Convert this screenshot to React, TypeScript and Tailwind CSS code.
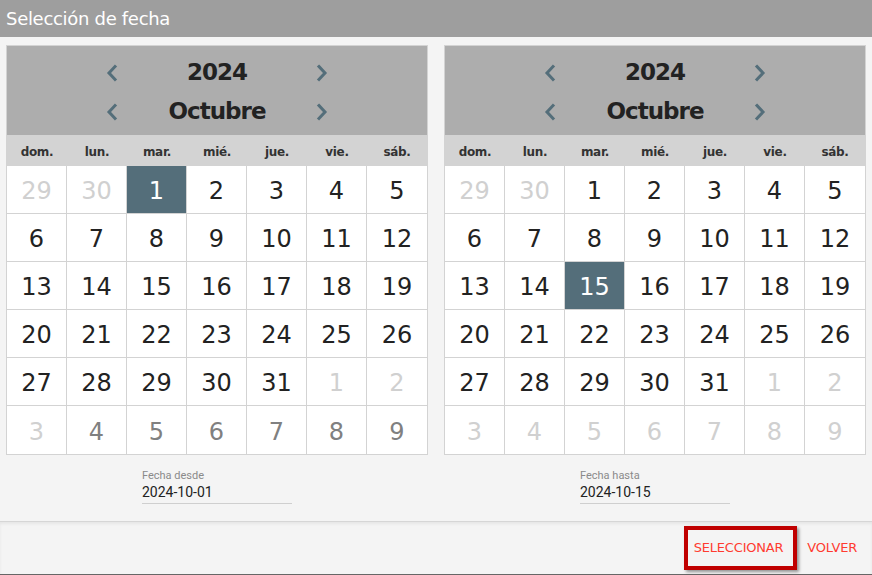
import React from 'react';

type Day = { n: number; tone: 'cur' | 'light' | 'mid' };

const WEEKDAYS = ['dom.', 'lun.', 'mar.', 'mié.', 'jue.', 'vie.', 'sáb.'];

// Octubre 2024 starts on Tuesday
const buildDays = (midTail: boolean): Day[] => {
  const days: Day[] = [
    { n: 29, tone: 'light' },
    { n: 30, tone: 'light' },
  ];
  for (let i = 1; i <= 31; i++) days.push({ n: i, tone: 'cur' });
  for (let i = 1; i <= 9; i++) {
    days.push({ n: i, tone: midTail && i >= 4 ? 'mid' : 'light' });
  }
  return days;
};

const Chevron = ({ dir }: { dir: 'left' | 'right' }) => (
  <svg width="14" height="18" viewBox="0 0 14 18" fill="none">
    <path
      d={dir === 'left' ? 'M10 2.5 L4 9 L10 15.5' : 'M4 2.5 L10 9 L4 15.5'}
      stroke="#546e7a"
      strokeWidth="3"
      strokeLinecap="square"
    />
  </svg>
);

const NavRow = ({ label }: { label: string }) => (
  <div className="flex h-[39px] items-center justify-center">
    <div className="flex w-[20px] justify-center">
      <Chevron dir="left" />
    </div>
    <div className="w-[190px] text-center text-[23px] font-bold tracking-[-1px] text-[#222]">{label}</div>
    <div className="flex w-[20px] justify-center">
      <Chevron dir="right" />
    </div>
  </div>
);

const Calendar = ({ selected, midTail }: { selected: number; midTail: boolean }) => {
  const days = buildDays(midTail);
  return (
    <div className="w-[422px] border border-[#d3d3d3] bg-white">
      {/* Header */}
      <div className="bg-[#adadad] pt-[7px] pb-[4px]">
        <NavRow label="2024" />
        <NavRow label="Octubre" />
      </div>

      {/* Weekdays */}
      <div className="grid h-[31px] grid-cols-7 items-center bg-[#d3d3d3] pt-[2px]">
        {WEEKDAYS.map((d) => (
          <div key={d} className="text-center text-[12px] font-bold tracking-[-0.3px] text-[#333]">
            {d}
          </div>
        ))}
      </div>

      {/* Days */}
      <div className="grid grid-cols-7">
        {days.map((d, i) => {
          const col = i % 7;
          const row = Math.floor(i / 7);
          const isSel = d.tone === 'cur' && d.n === selected;
          const color = isSel
            ? 'bg-[#546e7a] text-white'
            : d.tone === 'light'
              ? 'text-[#d0d0d0]'
              : d.tone === 'mid'
                ? 'text-[#808080]'
                : 'text-[#222]';
          return (
            <div
              key={i}
              className={`flex h-[48px] items-center justify-center pt-[3px] text-[24px] ${color} ${
                col < 6 ? 'border-r border-[#d3d3d3]' : ''
              } ${row < 5 ? 'border-b border-[#d3d3d3]' : ''}`}
            >
              {d.n}
            </div>
          );
        })}
      </div>
    </div>
  );
};

const DateField = ({ label, value }: { label: string; value: string }) => (
  <div className="mx-auto mt-[14px] w-[150px] border-b border-[#cfcfcf] pb-[2px] font-['Roboto',sans-serif]">
    <div className="text-[11px] leading-[14px] text-[#8a8a8a]">{label}</div>
    <div className="text-[14px] leading-[18px] text-[#222]">{value}</div>
  </div>
);

export default function App() {
  return (
    <div className="flex h-[575px] w-[872px] flex-col bg-[#f4f4f4] font-['DejaVu_Sans',sans-serif]">
      {/* Title */}
      <div className="h-[37px] bg-[#9e9e9e] px-[6px] text-[18px] leading-[37px] tracking-[-0.3px] text-white">
        Selección de fecha
      </div>

      {/* Calendars */}
      <div className="flex flex-1 gap-[16px] px-[6px] pt-[8px]">
        <div className="flex flex-col">
          <Calendar selected={1} midTail />
          <DateField label="Fecha desde" value="2024-10-01" />
        </div>
        <div className="flex flex-col">
          <Calendar selected={15} midTail={false} />
          <DateField label="Fecha hasta" value="2024-10-15" />
        </div>
      </div>

      {/* Footer */}
      <div className="flex h-[54px] items-center justify-end gap-[10px] border-t border-b border-t-[#d6d6d6] border-b-[#666] pr-[15px] shadow-[inset_0_2px_3px_rgba(0,0,0,0.06)]">
        <button className="h-[44px] border-4 border-[#c00000] pl-[6px] pr-[10px] font-['DejaVu_Sans',sans-serif] text-[13px] tracking-[-0.2px] text-[#ff3b30] shadow-[2px_2px_3px_rgba(0,0,0,0.4)]">
          SELECCIONAR
        </button>
        <button className="font-['DejaVu_Sans',sans-serif] text-[13px] tracking-[-0.2px] text-[#ff3b30]">
          VOLVER
        </button>
      </div>
    </div>
  );
}
